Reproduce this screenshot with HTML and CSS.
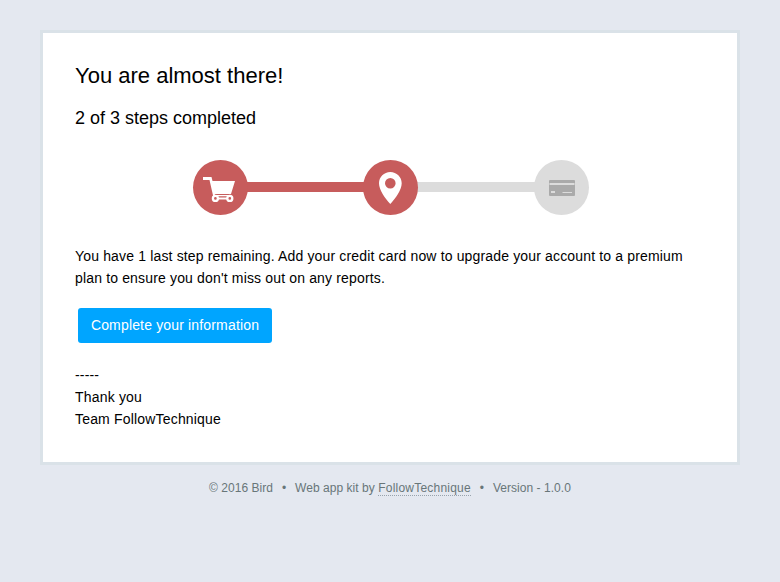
FILE: index.html
```html
<!DOCTYPE html>
<html lang="en">
<head>
<meta charset="utf-8">
<title>You are almost there!</title>
<link rel="stylesheet" href="styles.css">
</head>
<body>
<main class="card">
  <h1>You are almost there!</h1>
  <h2>2 of 3 steps completed</h2>
  <div class="steps">
    <div class="step done">
      <svg width="55" height="55" viewBox="0 0 55 55"><path fill="#fff" d="M10 17h8.500l1 4H42l-4 13H21.700l.3 1h16v1.200H20.200L16.500 20H10z"/><path d="M24 38.500h11" stroke="#fff" stroke-width="2"/><g fill="#c75c5c" stroke="#fff" stroke-width="2.300"><circle cx="22.400" cy="38.400" r="2.500"/><circle cx="36.800" cy="38.400" r="2.500"/></g></svg>
    </div>
    <div class="line done"></div>
    <div class="step done">
      <svg width="55" height="55" viewBox="0 0 55 55"><path fill="#fff" fill-rule="evenodd" d="M27.300 12C21 12 16 17 16 23.200 16 30 22 38 27.300 44 32.500 38 38.700 30 38.700 23.200 38.700 17 33.600 12 27.300 12zm0 6a5.300 5.300 0 1 1 0 10.600 5.300 5.300 0 0 1 0-10.600z"/></svg>
    </div>
    <div class="line wide"></div>
    <div class="step">
      <svg width="55" height="55" viewBox="0 0 55 55"><rect x="15" y="20" width="26" height="16" rx="1" fill="#aaa"/><path fill="#dcdcdc" d="M15.500 23h25v2h-25zM17 31h4v2h-4zM28.500 32h9.500v1h-9.500z"/></svg>
    </div>
  </div>
  <p>You have 1 last step remaining. Add your credit card now to upgrade your account to a premium plan to ensure you don't miss out on any reports.</p>
  <a class="button">Complete your information</a>
  <p class="signature">-----<br>Thank you<br>Team FollowTechnique</p>
</main>
<footer><span>© 2016 Bird</span><span>•</span><span>Web app kit by <a>FollowTechnique</a></span><span>•</span><span>Version - 1.0.0</span></footer>
</body>
</html>
```
FILE: styles.css
```css
* { box-sizing: border-box; }
body { margin: 0; padding-top: 30px; min-height: 582px; background: #e4e8f0; color: #000; font: 14px/22px "Liberation Sans", Arial, sans-serif; }
.card { width: 700px; height: 435px; margin: 0 auto; padding: 28px 32px 0; background: #fff; border: 3px solid #dae2e8; }
h1 { margin: 0; font-size: 22px; line-height: 30px; font-weight: 400; }
h2 { margin: 15px 0 0; font-size: 18px; line-height: 24px; font-weight: 400; }
.steps { display: flex; align-items: flex-start; margin: 30px 0 30px 118px; height: 55px; }
.step { position: relative; width: 55px; height: 55px; border-radius: 50%; background: #dcdcdc; }
.step svg { display: block; }
.line { width: 119px; height: 10px; margin: 22px -2px 0; background: #dcdcdc; }
.line.wide { width: 120px; }
.step.done, .line.done { background: #c75c5c; }
p { margin: 0; padding-right: 10px; letter-spacing: .157px; }
.signature { letter-spacing: .18px; }
.button { display: block; width: 194px; height: 35px; margin: 19px 0 21px 3px; border-radius: 3px; background: #00a5ff; color: #fff; text-align: center; line-height: 35px; letter-spacing: .16px; }
footer { display: flex; justify-content: center; gap: 8.9px; margin-top: 12px; font-size: 12px; letter-spacing: .04px; color: #687679; }
footer a { border-bottom: 1px dotted #98a3ad; letter-spacing: .22px; }
```
